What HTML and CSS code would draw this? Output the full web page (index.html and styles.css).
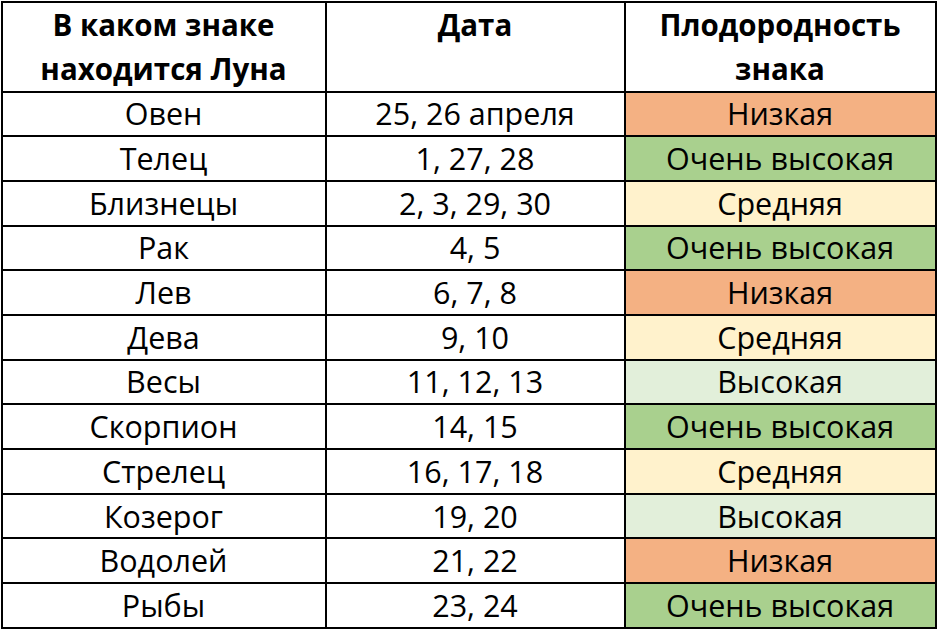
FILE: index.html
```html
<!DOCTYPE html>
<html lang="ru">
<head>
<meta charset="utf-8">
<title>Луна и плодородность</title>
<link rel="stylesheet" href="styles.css">
</head>
<body>
<table class="moon">
  <colgroup>
    <col class="c1">
    <col class="c2">
    <col class="c3">
  </colgroup>
  <thead>
    <tr class="head">
      <th>В каком знаке<br>находится Луна</th>
      <th class="top">Дата</th>
      <th>Плодородность<br>знака</th>
    </tr>
  </thead>
  <tbody>
    <tr><td>Овен</td><td>25, 26 апреля</td><td class="low">Низкая</td></tr>
    <tr><td>Телец</td><td>1, 27, 28</td><td class="vhigh">Очень высокая</td></tr>
    <tr><td>Близнецы</td><td>2, 3, 29, 30</td><td class="mid">Средняя</td></tr>
    <tr><td>Рак</td><td>4, 5</td><td class="vhigh">Очень высокая</td></tr>
    <tr><td>Лев</td><td>6, 7, 8</td><td class="low">Низкая</td></tr>
    <tr><td>Дева</td><td>9, 10</td><td class="mid">Средняя</td></tr>
    <tr><td>Весы</td><td>11, 12, 13</td><td class="high">Высокая</td></tr>
    <tr><td>Скорпион</td><td>14, 15</td><td class="vhigh">Очень высокая</td></tr>
    <tr><td>Стрелец</td><td>16, 17, 18</td><td class="mid">Средняя</td></tr>
    <tr><td>Козерог</td><td>19, 20</td><td class="high">Высокая</td></tr>
    <tr><td>Водолей</td><td>21, 22</td><td class="low">Низкая</td></tr>
    <tr><td>Рыбы</td><td>23, 24</td><td class="vhigh">Очень высокая</td></tr>
  </tbody>
</table>
</body>
</html>
```
FILE: styles.css
```css
html, body {
  margin: 0;
  padding: 0;
  background: #ffffff;
}
body {
  padding: 0.5px 0 0 0.5px;
}
.moon {
  border-collapse: collapse;
  table-layout: fixed;
  width: 935px;
  font-family: "Open Sans", "Liberation Sans", sans-serif;
  color: #000;
}
.c1 { width: 324px; }
.c2 { width: 299px; }
.c3 { width: 311px; }
.moon th, .moon td {
  border: 2px solid #000;
  text-align: center;
  padding: 0;
  overflow: hidden;
  white-space: nowrap;
}
.head {
  height: 89px;
}
.moon th {
  font-weight: bold;
  font-size: 29.5px;
  line-height: 44px;
  vertical-align: top;
  padding-top: 0;
}
.moon tbody tr {
  height: 44.7px;
}
.moon td {
  font-size: 30.5px;
  line-height: 36px;
  vertical-align: middle;
  padding-bottom: 1px;
}
.low { background: #f4b183; }
.vhigh { background: #a9d08e; }
.mid { background: #fff2cc; }
.high { background: #e2efda; }
```
